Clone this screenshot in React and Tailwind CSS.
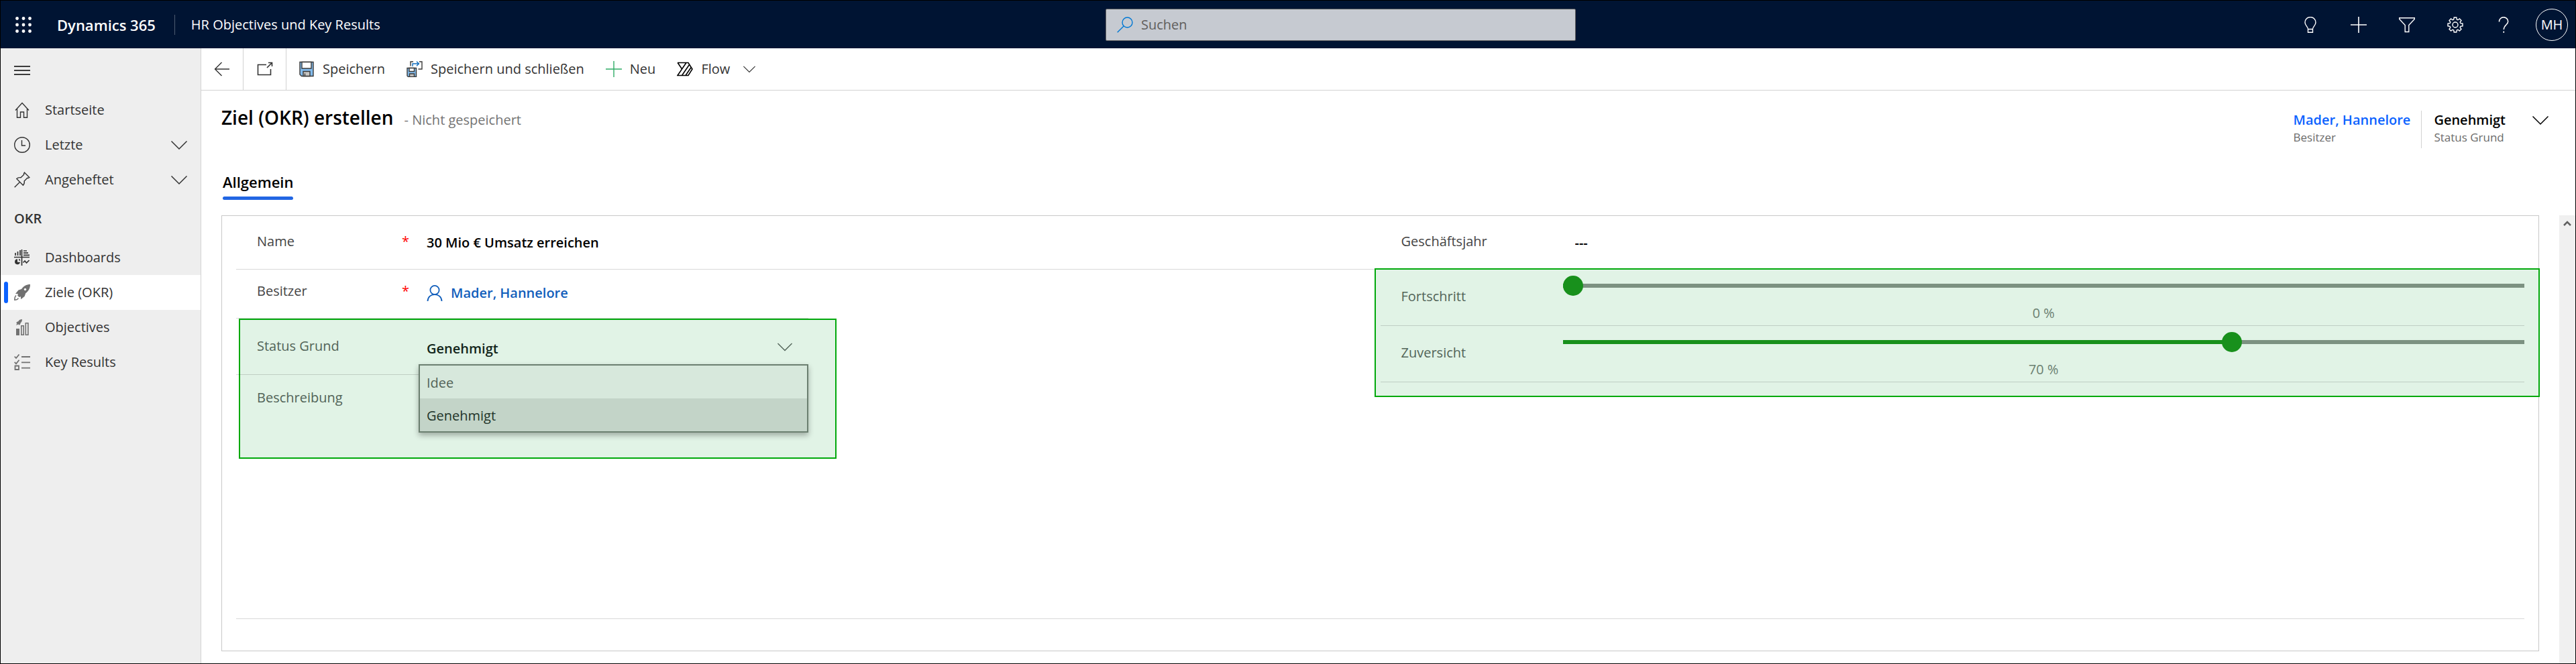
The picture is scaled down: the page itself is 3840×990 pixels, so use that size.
import React, { useState } from 'react';

const Icon = ({ children, size = 24, stroke = 1.4, className = '' }) => (
  <svg
    width={size}
    height={size}
    viewBox="0 0 24 24"
    fill="none"
    stroke="currentColor"
    strokeWidth={stroke}
    className={`shrink-0 ${className}`}
    aria-hidden="true"
  >
    {children}
  </svg>
);

const Chevron = ({ size = 24, stroke = 1.5, className = '' }) => (
  <Icon size={size} stroke={stroke} className={className}>
    <path d="M.5 6.500 12 18 23.500 6.500" />
  </Icon>
);

const HomeIcon = () => (
  <Icon>
    <path d="M2 12.500 12 1.500l10 11M4.500 10v13.200h5V15h5v8.200h5V10" />
  </Icon>
);

const ClockIcon = () => (
  <Icon>
    <circle cx="12" cy="12" r="11.300" />
    <path d="M11.500 5v8H17" />
  </Icon>
);

const PinIcon = () => (
  <Icon>
    <path d="M15.500 1.200 22.800 8.500l-1.800 1-1.200-.2-4.600 4.600c.5 2.500-.2 4.700-1.800 6.300L3.800 10.600c1.600-1.600 3.800-2.300 6.300-1.800l4.600-4.600-.2-1.200zM8.500 15.500.7 23.300" />
  </Icon>
);

const DashboardIcon = () => (
  <Icon stroke={1.7} className="text-[#333]">
    <path d="M0 11.500h23M11.500 0v24M2 9V5M5.500 9V3M9 9V1M14 2h5M14 5.200h7M14 8.400h9" />
    <path d="M5 14.200a4 4 0 1 0 4 4.600H5z" fill="currentColor" stroke="none" />
    <path d="M7 13.800a3.500 3.500 0 0 1 2.500 2.700H7z" fill="currentColor" stroke="none" />
    <path d="M13.500 19.500 16 17l2.500 3 4-4" />
  </Icon>
);

const RocketIcon = () => (
  <Icon className="text-[#717171]">
    <path
      d="M24 0c-5.500 0-9.800 2.400-13 7L6.500 8.500 2 14l4 .3-.8 2.400 2.300 2.300 2.400-.8.300 4 5.500-4.500L17.200 13.200C21.800 10 24 5.700 24 0z"
      fill="currentColor"
      stroke="none"
    />
    <circle cx="16.500" cy="7.500" r="1.700" fill="#fff" stroke="none" />
    <path d="M3 16.500C1.200 18 .7 20.300.8 23.300c2.600 0 4.500-.8 5.700-2.600" stroke="currentColor" />
  </Icon>
);

const ObjectivesIcon = () => (
  <Icon stroke={1.6} className="text-[#717171]">
    <path d="M3 14h5v10H3z" fill="currentColor" stroke="none" />
    <path d="M10.800 9.800h3.400v13.400h-3.400zM17.300 5.800h3.600v17.400h-3.600z" />
    <path d="M12 0C9.500 0 7.400 1.200 6.200 3.200L4.500 3.800 3 5.800l1.500.3L3 9l2.800-1.200 1.200-.3.2 1.500 2-1.700.4-1.700C11.200 4.200 12 2.300 12 0z" fill="currentColor" stroke="none" />
  </Icon>
);

const KeyResultsIcon = () => (
  <Icon stroke={1.8} className="text-[#717171]">
    <path d="M11 4h13M11 12.300h13M11 20.600h13M.7 3.500 3 6 7.500.5M.7 11.800 3 14.300l4.500-5.500M1.500 17.500h5.500v5.500H1.500z" />
  </Icon>
);

const SaveIcon = () => (
  <Icon>
    <path d="M2 1.500h20v21H4.500L2 20z" fill="#83bbec" stroke="#3b3a39" />
    <path d="M5 1.500h14V11H5z" fill="#fff" stroke="#3b3a39" />
    <path d="M7 15.500h10v7H7z" fill="#c8c6c4" stroke="#3b3a39" />
    <path d="M9.500 18.500v4" stroke="#3b3a39" />
  </Icon>
);

const SaveCloseIcon = () => (
  <Icon>
    <path d="M6 7.500V1h4M19 1h4v11h-5.500" stroke="#3b3a39" />
    <path d="M9 8V4h9.500M15 .8 18.500 4 15 7.200" stroke="#0f6cbd" />
    <path d="M1 10.500h13.500v13H2.500L1 22z" fill="#83bbec" stroke="#3b3a39" />
    <path d="M4 10.500h7.500v5H4z" fill="#fff" stroke="#3b3a39" />
    <path d="M4.500 19h7v4.500h-7z" fill="#c8c6c4" stroke="#3b3a39" />
  </Icon>
);

const FlowIcon = () => (
  <Icon stroke={1.6} className="text-black">
    <path d="M1 2.500h16l6 9.500-6 9.500H1L14 2.500M1.200 2.500l6.300 9.300M18.700 5.200 7.500 21.500M21.300 9.300 13 21.500" />
  </Icon>
);

const NavItem = ({ icon, label, chevron, active }) => (
  <li>
    <a
      href="#"
      className={`relative flex h-13 items-center px-5 text-[#333] ${active ? 'bg-white' : ''}`}
    >
      {active && <span className="absolute left-[5px] h-8 w-1.5 rounded-sm bg-[#0b62ff]" />}
      {icon}
      <span className="ml-[22px] flex-1">{label}</span>
      {chevron && <Chevron />}
    </a>
  </li>
);

const Command = ({ icon, children }) => (
  <button type="button" className="flex items-center gap-3">
    {icon}
    {children}
  </button>
);

const Slider = ({ id, label, value, onChange }) => (
  <div className="relative flex h-21 border-b border-black/15">
    <label htmlFor={id} className="w-68 shrink-0 pl-[31px] pt-[26px] text-[#526458]">{label}</label>
    <div className="flex flex-1 flex-col pt-[9px]">
      <input
        id={id}
        type="range"
        min="0"
        max="100"
        value={value}
        onChange={(e) => onChange(Number(e.target.value))}
        style={{
          backgroundImage: `linear-gradient(to right, #18901c calc(15px + (100% - 30px) * ${value / 100}), #7c9181 0)`,
        }}
        className="h-[30px] w-full appearance-none bg-[length:100%_6px] bg-center bg-no-repeat [&::-webkit-slider-thumb]:size-[30px] [&::-webkit-slider-thumb]:appearance-none [&::-webkit-slider-thumb]:rounded-full [&::-webkit-slider-thumb]:bg-[#18901c]"
      />
      <output htmlFor={id} className="mt-3 text-center text-[#6b7f71]">{value} %</output>
    </div>
  </div>
);

const TopBar = () => (
  <header className="grid h-[71px] grid-cols-[21fr_701px_19fr] items-center bg-[#001433] text-white">
    <div className="flex items-center">
      <button type="button" aria-label="App-Startfeld" className="ml-[22px]">
        <svg width="24" height="24" viewBox="0 0 24 24" fill="currentColor" aria-hidden="true">
          {[2.5, 12, 21.5].map((y) => [2.5, 12, 21.5].map((x) => (
            <circle key={`${x}-${y}`} cx={x} cy={y} r="2.4" />
          )))}
        </svg>
      </button>
      <span className="ml-[38px] text-[22px] font-semibold">Dynamics 365</span>
      <span className="ml-7 h-[30px] w-px bg-[#4d5b70]" />
      <span className="ml-6">HR Objectives und Key Results</span>
    </div>

    <label className="flex h-12 items-center gap-3 rounded-xs border border-[#5f5f5f] bg-[#c6cad1] pl-4">
      <Icon className="text-[#0078d4]">
        <circle cx="15.500" cy="8.500" r="7.500" />
        <path d="M10 14 .7 23.300" />
      </Icon>
      <input
        type="search"
        aria-label="Suchen"
        placeholder="Suchen"
        className="flex-1 bg-transparent outline-none placeholder:text-[#605e5c]"
      />
    </label>

    <div className="flex items-center justify-end">
      <button type="button" aria-label="Ideen" className="flex w-18 justify-center">
        <Icon>
          <path d="M8.500 18.500C8.500 14.500 4 13 4 8.500a8 8 0 0 1 16 0c0 4.500-4.500 6-4.500 10zM8.500 18.500v4.700h7v-4.700" />
        </Icon>
      </button>
      <button type="button" aria-label="Neu" className="flex w-18 justify-center">
        <Icon stroke={1.6}><path d="M12 0v24M0 12h24" /></Icon>
      </button>
      <button type="button" aria-label="Filter" className="flex w-18 justify-center">
        <Icon><path d="M.7 1.700h22.600v1.800l-8.500 9v10H9.200v-10l-8.500-9z" /></Icon>
      </button>
      <button type="button" aria-label="Einstellungen" className="flex w-18 justify-center">
        <Icon>
          <circle cx="12" cy="12" r="4" />
          <path d="M10.200 1h3.600l.5 3 1.600.7 2.500-1.800 2.600 2.600-1.800 2.500.7 1.600 3.100.6v3.600l-3.100.6-.7 1.600 1.800 2.500-2.600 2.600-2.500-1.800-1.600.7-.5 3h-3.600l-.5-3-1.600-.7-2.500 1.800L3 18.500 4.800 16l-.7-1.600-3.100-.6v-3.600l3.100-.6.7-1.600L3 5.500l2.600-2.600 2.500 1.800 1.600-.7z" />
        </Icon>
      </button>
      <button type="button" aria-label="Hilfe" className="flex w-18 justify-center">
        <Icon stroke={1.5}>
          <path d="M5.500 7.500a6.600 6.600 0 0 1 13.200-.5c0 4.800-6.400 5.500-6.400 12M12.300 21.500V24" />
        </Icon>
      </button>
      <button type="button" className="ml-3 mr-[11px] flex size-12 items-center justify-center rounded-full border border-white">
        MH
      </button>
    </div>
  </header>
);

const Sidebar = () => (
  <nav className="w-[299px] shrink-0 border-r border-[#d2d2d2] bg-[#eee]">
    <div className="flex h-[66px] items-center pl-5">
      <button type="button" aria-label="Navigation" className="text-black">
        <Icon><path d="M0 6h24M0 12h24M0 18h24" /></Icon>
      </button>
    </div>
    <ul>
      <NavItem icon={<HomeIcon />} label="Startseite" />
      <NavItem icon={<ClockIcon />} label="Letzte" chevron />
      <NavItem icon={<PinIcon />} label="Angeheftet" chevron />
    </ul>
    <h2 className="flex h-16 items-center pl-5 font-semibold text-[#333]">OKR</h2>
    <ul>
      <NavItem icon={<DashboardIcon />} label="Dashboards" />
      <NavItem icon={<RocketIcon />} label="Ziele (OKR)" active />
      <NavItem icon={<ObjectivesIcon />} label="Objectives" />
      <NavItem icon={<KeyResultsIcon />} label="Key Results" />
    </ul>
  </nav>
);

const CommandBar = () => (
  <div className="flex h-[63px] items-stretch border-b border-[#d2d2d2] text-[#333]">
    <button type="button" aria-label="Zurück" className="flex w-[63px] items-center justify-center border-r border-[#d2d2d2]">
      <Icon><path d="M11.500 2 1.500 12l10 10M1.500 12H23" /></Icon>
    </button>
    <button type="button" aria-label="In neuem Fenster öffnen" className="flex w-16 items-center justify-center border-r border-[#d2d2d2]">
      <Icon stroke={1.6}>
        <path d="M14 5.500H1.500v15h19V12M15 10l7.500-7.500M17 2.500h5.500V8" />
      </Icon>
    </button>
    <div className="ml-[18px] flex items-center gap-8">
      <Command icon={<SaveIcon />}>Speichern</Command>
      <Command icon={<SaveCloseIcon />}>Speichern und schließen</Command>
      <Command icon={<Icon className="text-[#2fac66]"><path d="M12 0v24M0 12h24" /></Icon>}>Neu</Command>
      <Command icon={<FlowIcon />}>
        Flow
        <Chevron size={18} className="ml-2" />
      </Command>
    </div>
  </div>
);

const RecordHeader = () => (
  <div className="flex items-start justify-between pl-[30px] pr-10 pt-5">
    <div className="flex items-baseline gap-4">
      <h1 className="text-[28px] font-semibold leading-10 text-black">Ziel (OKR) erstellen</h1>
      <span className="text-[#737373]">- Nicht gespeichert</span>
    </div>
    <div className="flex items-start pt-2.5">
      <div className="pr-4">
        <a href="#" className="block font-semibold text-[#0b62ff]">Mader, Hannelore</a>
        <div className="text-[17px] leading-6 text-[#6b6b6b]">Besitzer</div>
      </div>
      <div className="h-14 border-l border-[#d2d2d2] pl-[18px]">
        <div className="font-semibold text-black">Genehmigt</div>
        <div className="text-[17px] leading-6 text-[#6b6b6b]">Status Grund</div>
      </div>
      <button type="button" aria-label="Kopfzeile erweitern" className="ml-10 mt-0.5 text-black">
        <Chevron />
      </button>
    </div>
  </div>
);

const GoalForm = () => {
  const [name, setName] = useState('30 Mio € Umsatz erreichen');
  const [status, setStatus] = useState('Genehmigt');
  const [progress, setProgress] = useState(0);
  const [confidence, setConfidence] = useState(70);

  return (
    <form className="mr-[30px] flex flex-1 flex-col border border-[#c8c8c8] px-[21px] pb-[47px] text-[#444]">
      <div className="grid flex-1 grid-cols-2 border-b border-black/15">
        <div className="flex flex-col">
          <div className="flex h-20 border-b border-black/15">
            <label htmlFor="name" className="flex w-68 shrink-0 justify-between pl-[31px] pr-[14px] pt-6">
              Name <span className="text-[#f00]">*</span>
            </label>
            <input
              id="name"
              value={name}
              onChange={(e) => setName(e.target.value)}
              className="mt-[26px] h-7 flex-1 px-3 font-semibold text-black outline-none"
            />
          </div>

          <div className="flex h-[73px] w-1/2 border-b border-black/15">
            <div className="flex w-68 shrink-0 justify-between pl-[31px] pr-[14px] pt-[18px]">
              Besitzer <span className="text-[#f00]">*</span>
            </div>
            <a href="#" className="mt-[21px] flex h-7 items-center gap-3 px-3 font-semibold text-[#115ebb]">
              <Icon stroke={1.8}>
                <circle cx="12" cy="7.500" r="6.600" />
                <path d="M1.500 24c.3-6.300 4.800-9.900 10.500-9.900S22.200 17.700 22.500 24" />
              </Icon>
              Mader, Hannelore
            </a>
          </div>

          <div className="relative flex w-1/2 flex-1 flex-col text-[#526458]">
            {/* highlighted area around status and description */}
            <div className="absolute -right-[42px] left-1 top-0 h-[209px] border-2 border-[#00a80b] bg-[#e1f3e6]" />
            <div className="relative z-10 flex h-21 border-b border-black/15">
              <label htmlFor="status" className="w-68 shrink-0 pl-[31px] pt-[27px]">Status Grund</label>
              <div className="relative flex-1">
                <select
                  id="status"
                  value={status}
                  onChange={(e) => setStatus(e.target.value)}
                  className="mt-[31px] h-7 w-full appearance-none px-3 font-semibold text-[#12251a] outline-none"
                >
                  <option>Idee</option>
                  <option>Genehmigt</option>
                </select>
                <Chevron size={22} className="pointer-events-none absolute right-6 top-[31px]" />
                <ul role="listbox" aria-label="Status Grund" className="absolute inset-x-0 top-17 border-2 border-[#6b7f70] bg-[#d7e8dc] shadow-[0_4px_8px_rgba(0,0,0,0.3)]">
                  {['Idee', 'Genehmigt'].map((option) => (
                    <li
                      key={option}
                      role="option"
                      aria-selected={option === status}
                      onClick={() => setStatus(option)}
                      className={`flex h-[49px] items-center px-2.5 pt-0.5 ${option === status ? 'bg-[#c3d4c8] text-[#22352a]' : ''}`}
                    >
                      {option}
                    </li>
                  ))}
                </ul>
              </div>
            </div>
            <div className="relative flex flex-1">
              <label htmlFor="description" className="w-68 shrink-0 pl-[31px] pt-5">Beschreibung</label>
              <textarea id="description" className="flex-1 resize-none px-3 pt-6 outline-none" />
            </div>
          </div>
        </div>

        <div>
          <div className="flex h-20 border-b border-black/15">
            <label htmlFor="year" className="w-68 shrink-0 pl-[31px] pt-6">Geschäftsjahr</label>
            <input id="year" defaultValue="---" className="mt-[26px] h-7 flex-1 px-[18px] font-semibold text-black outline-none" />
          </div>
          <div className="relative">
            {/* highlighted area around the sliders */}
            <div className="absolute -bottom-[22px] -left-[9px] -right-[23px] -top-0.5 border-2 border-[#00a80b] bg-[#e1f3e6]" />
            <Slider id="progress" label="Fortschritt" value={progress} onChange={setProgress} />
            <Slider id="confidence" label="Zuversicht" value={confidence} onChange={setConfidence} />
          </div>
        </div>
      </div>
    </form>
  );
};

const App = () => (
  <div className="flex min-h-screen flex-col border border-black bg-white font-['Open_Sans','Noto_Sans',sans-serif] text-[20px] leading-7">
    <TopBar />
    <div className="flex flex-1">
      <Sidebar />
      <main className="flex min-w-0 flex-1 flex-col">
        <CommandBar />
        <RecordHeader />
        <div role="tablist" className="flex pl-8 pt-9">
          <button type="button" role="tab" aria-selected="true" className="text-[22px] font-semibold text-black">
            Allgemein
            <span className="mt-2 block h-[5px] rounded-full bg-[#2266e3]" />
          </button>
        </div>
        <div className="mt-[23px] flex flex-1 pl-[30px]">
          <div className="flex flex-1 flex-col pb-[18px]">
            <GoalForm />
          </div>
          <div className="flex w-6 justify-center bg-[#f0f0f0] pt-1.5 text-[#606060]">
            <Icon size={12} stroke={5}><path d="M2 18 12 8l10 10" /></Icon>
          </div>
        </div>
      </main>
    </div>
  </div>
);

export default App;
